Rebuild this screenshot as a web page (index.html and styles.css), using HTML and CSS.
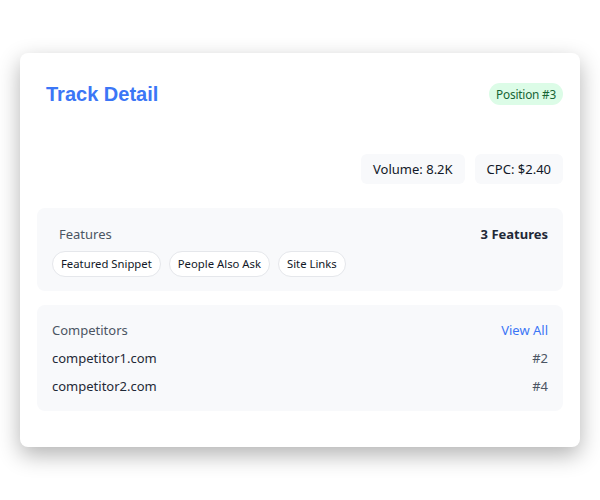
FILE: index.html
```html
<!DOCTYPE html>
<html>
<head>
<meta charset="utf-8">
<link rel="stylesheet" href="styles.css">
</head>
<body>
<div class="card">
  <div class="header">
    <h1 class="title">Track Detail</h1>
    <span class="badge">Position #3</span>
  </div>
  <div class="metrics">
    <span class="metric">Volume: 8.2K</span>
    <span class="metric">CPC: $2.40</span>
  </div>
  <div class="panel features">
    <div class="panel-head">
      <span class="label label-indent">Features</span>
      <span class="count">3 Features</span>
    </div>
    <div class="pills">
      <span class="pill">Featured Snippet</span>
      <span class="pill">People Also Ask</span>
      <span class="pill">Site Links</span>
    </div>
  </div>
  <div class="panel competitors">
    <div class="panel-head">
      <span class="label">Competitors</span>
      <a class="link">View All</a>
    </div>
    <div class="row"><span>competitor1.com</span><span class="rank">#2</span></div>
    <div class="row"><span>competitor2.com</span><span class="rank">#4</span></div>
  </div>
</div>
</body>
</html>
```

FILE: styles.css
```css
html, body {
  margin: 0;
  padding: 0;
  background: #ffffff;
}
body {
  min-height: 500px;
  display: flex;
  align-items: center;
  justify-content: center;
  font-family: "Noto Sans", "Segoe UI", sans-serif;
  color: #1f2937;
}
.card {
  width: 560px;
  box-sizing: border-box;
  height: 394px;
  background: #fff;
  border-radius: 8px;
  box-shadow: 0 8px 22px rgba(0, 0, 0, 0.3);
  padding: 17px 17px;
  display: flex;
  flex-direction: column;
}
.header {
  display: flex;
  justify-content: space-between;
  align-items: center;
  padding: 12px 0 0 9px;
}
.title {
  margin: 0;
  font-family: "Liberation Sans", Arial, sans-serif;
  font-weight: bold;
  font-size: 20px;
  color: #3b76f6;
  line-height: 24px;
}
.badge {
  background: #dcfce7;
  color: #166534;
  font-size: 11.8px;
  line-height: 16px;
  padding: 3px 7px;
  border-radius: 999px;
  letter-spacing: -0.2px;
}
.metrics {
  display: flex;
  justify-content: flex-end;
  gap: 10px;
  margin-top: 48px;
}
.metric {
  background: #f8f9fb;
  border-radius: 6px;
  font-size: 13px;
  line-height: 18px;
  padding: 6px 12px;
  color: #111827;
}
.panel {
  background: #f8f9fb;
  border-radius: 8px;
  padding: 15px 15px;
}
.features {
  margin-top: 24px;
  padding-top: 16px;
  padding-bottom: 14px;
}
.panel-head {
  display: flex;
  justify-content: space-between;
  align-items: center;
  font-size: 13px;
  line-height: 20px;
}
.label {
  color: #4b5563;
}
.label-indent {
  padding-left: 7px;
}
.count {
  font-weight: bold;
  color: #1f2937;
}
.pills {
  display: flex;
  gap: 8px;
  margin-top: 7px;
}
.pill {
  background: #fff;
  border: 1px solid #e5e7eb;
  border-radius: 999px;
  font-size: 11.3px;
  line-height: 16px;
  padding: 4px 8px;
  color: #111827;
}
.competitors {
  margin-top: 14px;
  padding-top: 15px;
  padding-bottom: 15px;
}
.link {
  color: #3b76f6;
}
.row {
  display: flex;
  justify-content: space-between;
  font-size: 13px;
  line-height: 20px;
  margin-top: 8px;
  color: #1f2937;
}
.rank {
  color: #4b5563;
}
```
